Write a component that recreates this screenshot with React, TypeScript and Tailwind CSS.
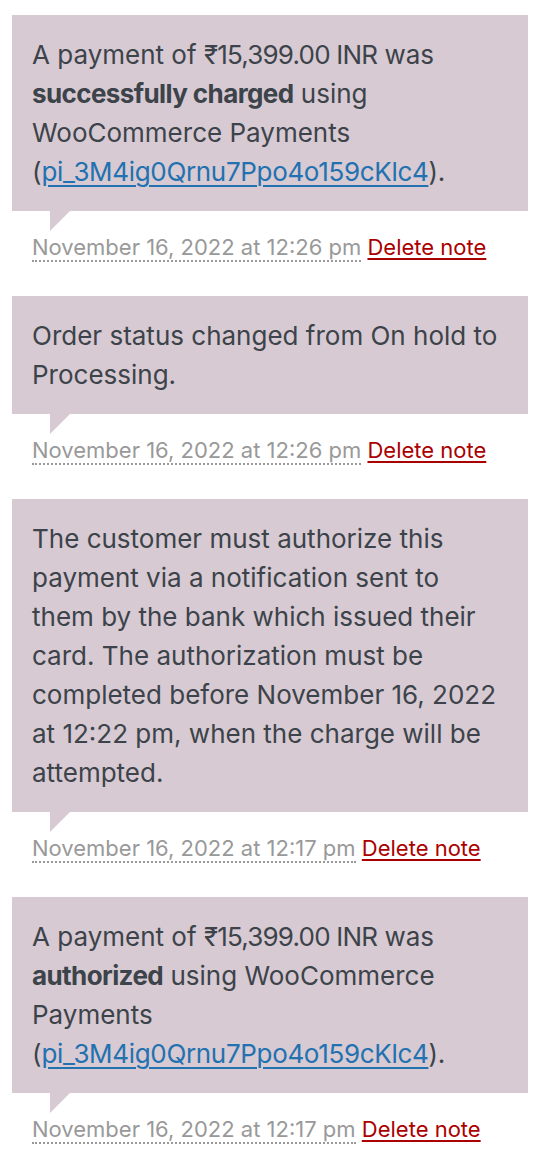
import React from "react";

type Note = { body: React.ReactNode; date: string };

const Link = ({ children }: { children: React.ReactNode }) => (
  <a
    href="#"
    className="text-[#2271b1] underline decoration-[2px] underline-offset-[4px] tracking-[-0.33px]"
  >
    {children}
  </a>
);

const Amount = () => <span className="tracking-[-0.8px]">₹15,399.00 INR</span>;

const notes: Note[] = [
  {
    body: (
      <>
        A payment of <Amount /> was{" "}
        <strong className="font-bold tracking-[-0.6px]">successfully charged</strong> using WooCommerce
        Payments (<Link>pi_3M4ig0Qrnu7Ppo4o159cKlc4</Link>).
      </>
    ),
    date: "November 16, 2022 at 12:26 pm",
  },
  {
    body: <>Order status changed from On hold to Processing.</>,
    date: "November 16, 2022 at 12:26 pm",
  },
  {
    body: (
      <>
        The customer must authorize this payment via a notification sent to them by the bank which issued
        their card. The authorization must be completed before November 16, 2022 at 12:22 pm, when the
        charge will be attempted.
      </>
    ),
    date: "November 16, 2022 at 12:17 pm",
  },
  {
    body: (
      <>
        A payment of <Amount /> was <strong className="font-bold tracking-[-0.6px]">authorized</strong>{" "}
        using WooCommerce Payments (<Link>pi_3M4ig0Qrnu7Ppo4o159cKlc4</Link>).
      </>
    ),
    date: "November 16, 2022 at 12:17 pm",
  },
];

export default function App() {
  return (
    <div
      className="min-h-[1160px] w-[540px] bg-white px-3 pt-[15px]"
      style={{ fontFamily: "Inter, 'Noto Sans', sans-serif" }}
    >
      <ul className="flex flex-col gap-[12px]">
        {notes.map((n, i) => (
          <li key={i}>
            <div className="relative bg-[#d7cad2] px-5 py-5 text-[26px] leading-[39px] text-[#3c434a]">
              <p>{n.body}</p>
              <span className="absolute left-[38px] bottom-[-20px] h-0 w-0 border-t-[20px] border-r-[20px] border-t-[#d7cad2] border-r-transparent" />
            </div>
            <p className="px-5 pt-[21px] pb-[22px] text-[22px] leading-[30px] text-[#999]">
              <abbr className="no-underline border-b-2 border-dotted border-[#999]" title={n.date}>
                {n.date}
              </abbr>{" "}
              <a href="#" className="text-[#a00] underline decoration-[2px] underline-offset-[3px]">
                Delete note
              </a>
            </p>
          </li>
        ))}
      </ul>
    </div>
  );
}
